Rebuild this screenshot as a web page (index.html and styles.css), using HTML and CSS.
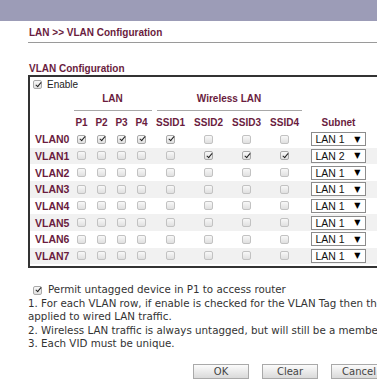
FILE: index.html
```html
<!DOCTYPE html>
<html lang="en">
<head>
  <meta charset="UTF-8">
  <title>LAN &gt;&gt; VLAN Configuration</title>
  <link rel="stylesheet" href="styles.css">
</head>
<body>
  <div class="topbar"></div>

  <div class="content">
    <h1 class="crumb">LAN &gt;&gt; VLAN Configuration</h1>

    <h2 class="section-title">VLAN Configuration</h2>
    <div class="vlan-box">
      <label class="enable-row"><input type="checkbox" class="cb" checked> Enable</label>

      <div class="grid group-row">
        <div></div>
        <div class="grp grp-lan">LAN</div>
        <div class="grp grp-wlan">Wireless LAN</div>
      </div>

      <div class="grid col-row">
        <div></div>
        <div>P1</div><div>P2</div><div>P3</div><div>P4</div>
        <div>SSID1</div><div>SSID2</div><div>SSID3</div><div>SSID4</div>
        <div>Subnet</div>
      </div>

      <div class="grid vrow">
        <div class="vname">VLAN0</div>
        <div><input type="checkbox" class="cb" checked></div>
        <div><input type="checkbox" class="cb" checked></div>
        <div><input type="checkbox" class="cb" checked></div>
        <div><input type="checkbox" class="cb" checked></div>
        <div><input type="checkbox" class="cb" checked></div>
        <div><input type="checkbox" class="cb"></div>
        <div><input type="checkbox" class="cb"></div>
        <div><input type="checkbox" class="cb"></div>
        <div class="subnet"><div class="sel"><span>LAN 1</span><span class="arrow">&#9660;</span></div></div>
      </div>
      <div class="grid vrow">
        <div class="vname">VLAN1</div>
        <div><input type="checkbox" class="cb"></div>
        <div><input type="checkbox" class="cb"></div>
        <div><input type="checkbox" class="cb"></div>
        <div><input type="checkbox" class="cb"></div>
        <div><input type="checkbox" class="cb"></div>
        <div><input type="checkbox" class="cb" checked></div>
        <div><input type="checkbox" class="cb" checked></div>
        <div><input type="checkbox" class="cb" checked></div>
        <div class="subnet"><div class="sel"><span>LAN 2</span><span class="arrow">&#9660;</span></div></div>
      </div>
      <div class="grid vrow">
        <div class="vname">VLAN2</div>
        <div><input type="checkbox" class="cb"></div>
        <div><input type="checkbox" class="cb"></div>
        <div><input type="checkbox" class="cb"></div>
        <div><input type="checkbox" class="cb"></div>
        <div><input type="checkbox" class="cb"></div>
        <div><input type="checkbox" class="cb"></div>
        <div><input type="checkbox" class="cb"></div>
        <div><input type="checkbox" class="cb"></div>
        <div class="subnet"><div class="sel"><span>LAN 1</span><span class="arrow">&#9660;</span></div></div>
      </div>
      <div class="grid vrow">
        <div class="vname">VLAN3</div>
        <div><input type="checkbox" class="cb"></div>
        <div><input type="checkbox" class="cb"></div>
        <div><input type="checkbox" class="cb"></div>
        <div><input type="checkbox" class="cb"></div>
        <div><input type="checkbox" class="cb"></div>
        <div><input type="checkbox" class="cb"></div>
        <div><input type="checkbox" class="cb"></div>
        <div><input type="checkbox" class="cb"></div>
        <div class="subnet"><div class="sel"><span>LAN 1</span><span class="arrow">&#9660;</span></div></div>
      </div>
      <div class="grid vrow">
        <div class="vname">VLAN4</div>
        <div><input type="checkbox" class="cb"></div>
        <div><input type="checkbox" class="cb"></div>
        <div><input type="checkbox" class="cb"></div>
        <div><input type="checkbox" class="cb"></div>
        <div><input type="checkbox" class="cb"></div>
        <div><input type="checkbox" class="cb"></div>
        <div><input type="checkbox" class="cb"></div>
        <div><input type="checkbox" class="cb"></div>
        <div class="subnet"><div class="sel"><span>LAN 1</span><span class="arrow">&#9660;</span></div></div>
      </div>
      <div class="grid vrow">
        <div class="vname">VLAN5</div>
        <div><input type="checkbox" class="cb"></div>
        <div><input type="checkbox" class="cb"></div>
        <div><input type="checkbox" class="cb"></div>
        <div><input type="checkbox" class="cb"></div>
        <div><input type="checkbox" class="cb"></div>
        <div><input type="checkbox" class="cb"></div>
        <div><input type="checkbox" class="cb"></div>
        <div><input type="checkbox" class="cb"></div>
        <div class="subnet"><div class="sel"><span>LAN 1</span><span class="arrow">&#9660;</span></div></div>
      </div>
      <div class="grid vrow">
        <div class="vname">VLAN6</div>
        <div><input type="checkbox" class="cb"></div>
        <div><input type="checkbox" class="cb"></div>
        <div><input type="checkbox" class="cb"></div>
        <div><input type="checkbox" class="cb"></div>
        <div><input type="checkbox" class="cb"></div>
        <div><input type="checkbox" class="cb"></div>
        <div><input type="checkbox" class="cb"></div>
        <div><input type="checkbox" class="cb"></div>
        <div class="subnet"><div class="sel"><span>LAN 1</span><span class="arrow">&#9660;</span></div></div>
      </div>
      <div class="grid vrow">
        <div class="vname">VLAN7</div>
        <div><input type="checkbox" class="cb"></div>
        <div><input type="checkbox" class="cb"></div>
        <div><input type="checkbox" class="cb"></div>
        <div><input type="checkbox" class="cb"></div>
        <div><input type="checkbox" class="cb"></div>
        <div><input type="checkbox" class="cb"></div>
        <div><input type="checkbox" class="cb"></div>
        <div><input type="checkbox" class="cb"></div>
        <div class="subnet"><div class="sel"><span>LAN 1</span><span class="arrow">&#9660;</span></div></div>
      </div>
    </div>

    <div class="notes">
      <label class="permit"><input type="checkbox" class="cb" checked> Permit untagged device in P1 to access router</label>
      <p>1. For each VLAN row, if enable is checked for the VLAN Tag then the VID will be<br>applied to wired LAN traffic.</p>
      <p>2. Wireless LAN traffic is always untagged, but will still be a member of the VLAN.</p>
      <p>3. Each VID must be unique.</p>
    </div>

    <div class="buttons">
      <button type="button">OK</button>
      <button type="button">Clear</button>
      <button type="button">Cancel</button>
    </div>
  </div>
</body>
</html>
```

FILE: styles.css
```css
body {
  margin: 0;
  font-family: "Liberation Sans", Arial, sans-serif;
  background: #fff;
  overflow: hidden;
}
.topbar {
  height: 21px;
  background: #9c9cb7;
}
.content {
  width: 520px;
  padding-left: 28px;
}
.crumb {
  margin: 0;
  padding: 6px 0 3px 1px;
  font-size: 10px;
  line-height: 12px;
  font-weight: bold;
  color: #6a1c3e;
  border-bottom: 1px solid #9a9a9a;
}
.section-title {
  margin: 20px 0 0 1px;
  font-size: 10px;
  line-height: 12px;
  font-weight: bold;
  color: #6a1c3e;
}

/* main box */
.vlan-box {
  width: 480px;
  border: 2px solid #333;
  padding-bottom: 2px;
}
.enable-row {
  height: 15px;
  display: flex;
  align-items: center;
  gap: 5px;
  padding-left: 3px;
  font-size: 10px;
  color: #222;
}
.grid {
  display: grid;
  grid-template-columns: 41.5px repeat(4, 20px) repeat(4, 38px) 70px;
}
.group-row {
  height: 19px;
}
.grp {
  height: 18px;
  line-height: 14px;
  text-align: center;
  font-size: 10px;
  font-weight: bold;
  color: #6a1c3e;
  border-bottom: 1px solid #a8a8a8;
}
.grp-lan {
  grid-column: span 4;
  margin-left: 2px;
}
.grp-wlan {
  grid-column: span 4;
  margin: 0 2px 0 5px;
}
.col-row {
  height: 20px;
  padding-top: 6px;
  box-sizing: border-box;
  line-height: 12px;
  font-size: 10px;
  font-weight: bold;
  color: #6a1c3e;
  text-align: center;
}
.vrow {
  height: 16.667px;
}
.vrow:nth-child(odd) {
  background: #f1f1f1;
}
.vrow > div {
  display: flex;
  align-items: center;
  justify-content: center;
}
.vrow > .vname {
  justify-content: flex-start;
  padding-left: 5px;
  font-size: 10.5px;
  font-weight: bold;
  color: #6a1c3e;
}
.vrow > .subnet {
  justify-content: flex-start;
  padding-left: 7px;
}
.sel {
  width: 55px;
  height: 14px;
  box-sizing: border-box;
  border: 1px solid #8c8c8c;
  background: #fff;
  display: flex;
  align-items: center;
  justify-content: space-between;
  padding: 0 4px;
  font-size: 10.5px;
  color: #111;
}
.sel .arrow {
  font-size: 8px;
  font-family: "DejaVu Sans", sans-serif;
  color: #000;
}

/* checkboxes */
.cb {
  appearance: none;
  -webkit-appearance: none;
  position: relative;
  width: 9px;
  height: 9px;
  margin: 0;
  border: 1px solid #c2c2c2;
  border-radius: 2px;
  background: linear-gradient(#f8f8f8, #e0e0e0);
}
.cb:checked {
  border-color: #a9a9a9;
}
.cb:checked::after {
  content: "";
  position: absolute;
  left: 2.5px;
  top: -0.5px;
  width: 2px;
  height: 5px;
  border: solid #222;
  border-width: 0 1.7px 1.7px 0;
  transform: rotate(40deg);
}

/* notes under the box */
.notes {
  margin-top: 15px;
  font-family: "DejaVu Sans", Verdana, sans-serif;
  font-size: 10.3px;
  line-height: 13.5px;
  color: #333;
}
.permit {
  display: flex;
  align-items: center;
  gap: 6px;
  padding-left: 5px;
}
.notes p {
  margin: 0;
  white-space: nowrap;
}
.buttons {
  display: flex;
  gap: 13px;
  margin-top: 13px;
  padding-left: 165px;
}
.buttons button {
  width: 56px;
  height: 15px;
  padding: 0;
  border: 1px solid #a9a9a9;
  background: linear-gradient(#fbfbfb, #dadada);
  font-family: "DejaVu Sans", Verdana, sans-serif;
  font-size: 10px;
  color: #444;
}
```
